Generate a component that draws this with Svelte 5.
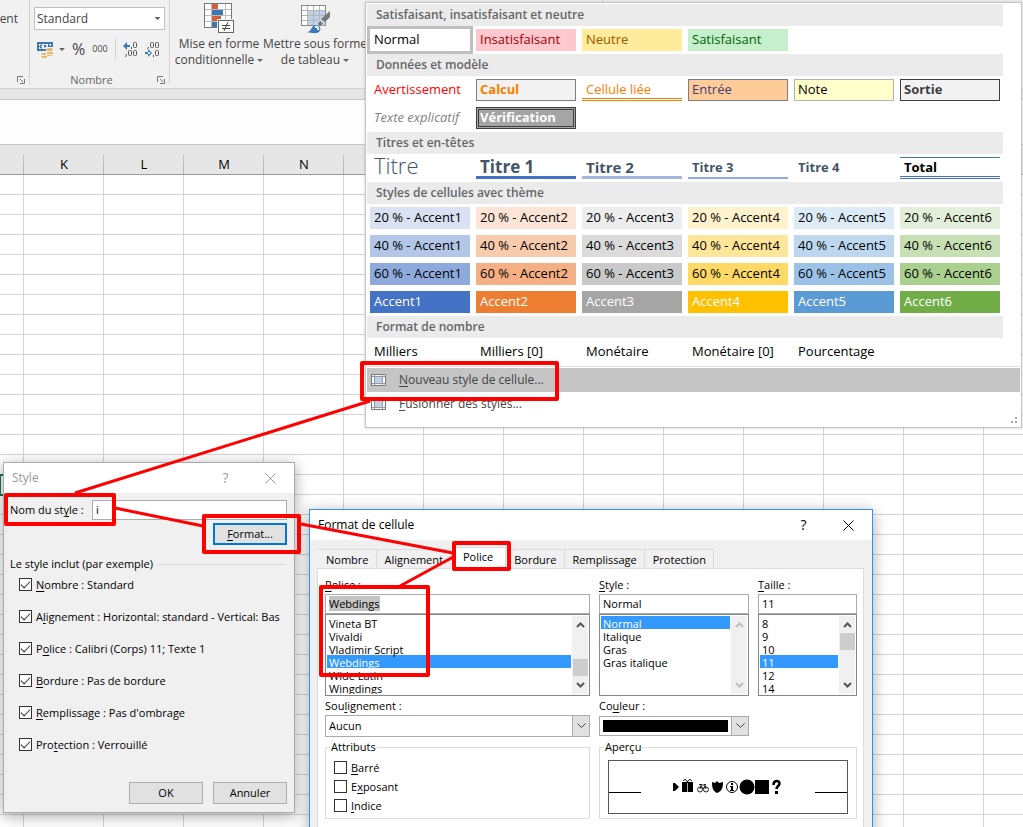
<script>
  import { onMount } from 'svelte';

  const columns = ['', 'K', 'L', 'M', 'N', '', '', '', '', '', '', '', '', ''];
  const rows = Array.from({ length: 33 }, (_, i) => i + 1);

  const accents = [1, 2, 3, 4, 5, 6];
  const tints = [20, 40, 60];

  const themed = [
    ...tints.flatMap((t) => accents.map((n) => ({ label: `${t} % - Accent${n}`, cls: `a${n} t${t}` }))),
    ...accents.map((n) => ({ label: `Accent${n}`, cls: `a${n} full` }))
  ];

  const sections = [
    {
      title: 'Satisfaisant, insatisfaisant et neutre',
      cells: [
        { label: 'Normal', cls: 'current' },
        { label: 'Insatisfaisant', cls: 'bad' },
        { label: 'Neutre', cls: 'neutral' },
        { label: 'Satisfaisant', cls: 'good' }
      ]
    },
    {
      title: 'Données et modèle',
      cells: [
        { label: 'Avertissement', cls: 'warning' },
        { label: 'Calcul', cls: 'calc' },
        { label: 'Cellule liée', cls: 'linked' },
        { label: 'Entrée', cls: 'entry' },
        { label: 'Note', cls: 'note' },
        { label: 'Sortie', cls: 'output' },
        { label: 'Texte explicatif', cls: 'explain' },
        { label: 'Vérification', cls: 'check' }
      ]
    },
    {
      title: 'Titres et en-têtes',
      cells: [
        { label: 'Titre', cls: 'title' },
        { label: 'Titre 1', cls: 'h1' },
        { label: 'Titre 2', cls: 'h2' },
        { label: 'Titre 3', cls: 'h3' },
        { label: 'Titre 4', cls: 'h4' },
        { label: 'Total', cls: 'total' }
      ]
    },
    { title: 'Styles de cellules avec thème', cells: themed },
    {
      title: 'Format de nombre',
      cells: [
        { label: 'Milliers', cls: '' },
        { label: 'Milliers [0]', cls: '' },
        { label: 'Monétaire', cls: '' },
        { label: 'Monétaire [0]', cls: '' },
        { label: 'Pourcentage', cls: '' }
      ]
    }
  ];

  // [before, access key, after]
  let includes = [
    { text: ['', 'N', 'ombre : Standard'], on: true },
    { text: ['A', 'l', 'ignement : Horizontal: standard - Vertical: Bas'], on: true },
    { text: ['P', 'o', 'lice : Calibri (Corps) 11; Texte 1'], on: true },
    { text: ['', 'B', 'ordure : Pas de bordure'], on: true },
    { text: ['', 'R', "emplissage : Pas d'ombrage"], on: true },
    { text: ['Pro', 't', 'ection : Verrouillé'], on: true }
  ];

  let effects = [
    { text: ['', 'B', 'arré'], on: false },
    { text: ['E', 'x', 'posant'], on: false },
    { text: ['', 'I', 'ndice'], on: false }
  ];

  const tabs = ['Nombre', 'Alignement', 'Police', 'Bordure', 'Remplissage', 'Protection'];
  let activeTab = 'Police';

  const fonts = ['Vineta BT', 'Vivaldi', 'Vladimir Script', 'Webdings', 'Wide Latin', 'Wingdings'];
  const faces = ['Normal', 'Italique', 'Gras', 'Gras italique'];
  const sizes = ['8', '9', '10', '11', '12', '14'];

  let styleName = 'i';
  let font = 'Webdings';
  let face = 'Normal';
  let size = '11';
  let fontInput;

  onMount(() => {
    fontInput.focus({ preventScroll: true });
    fontInput.select();
  });
</script>

<div class="desktop">
  <header class="ribbon">
    <div class="group align-group">
      <div class="clipped">ment</div>
      <button class="launcher" aria-label="Alignement">
        <svg width="8" height="8" viewBox="0 0 8 8"><path d="M.5 6V.5H6M3 3l3 3M7.500 3v4.500H3" fill="none" stroke="#777" /></svg>
      </button>
    </div>

    <div class="group number-group">
      <select class="number-format" aria-label="Format de nombre">
        <option>Standard</option>
      </select>
      <div class="number-tools">
        <button class="tool money" aria-label="Format comptable">
          <svg width="17" height="17" viewBox="0 0 17 17">
            <path d="M0 1h16v9H0z" fill="#3c78b5" />
            <path d="M2 3h2v1H3v1H2zM14 3h-2v1h1v1h1zM2 8h2V7H3V6H2z" fill="#fff" />
            <path d="M5 3h6v2l-2 3H5V6H4V5h1z" fill="#fff" />
            <circle cx="8" cy="5" r="1.500" fill="#3c78b5" />
            <path d="M9 6h8v11H3v-6h6z" fill="#f1f1f1" />
            <path d="M10 7h5v1h1v1h-1v1h-5V9H9V8h1zM10 11h6v2h-6zM5 12h4v2H4v-1h1zM10 14h5v1h-5zM4 15h6v2H5v-1H4z" fill="#e8b96a" />
          </svg>
          <span class="caret"></span>
        </button>
        <button class="tool percent">%</button>
        <button class="tool thousands">000</button>
        <span class="divider"></span>
        <button class="tool decimals" aria-label="Ajouter une décimale">
          <svg width="15" height="16" viewBox="0 0 15 16">
            <path d="M2 4h5v2H2zM4 1v8L0 5z" fill="#3c78b5" />
            <g fill="none" stroke="#555"><rect x="10.500" y="1.500" width="3" height="5" rx="1" /><rect x="5.500" y="9.500" width="3" height="5" rx="1" /><rect x="10.500" y="9.500" width="3" height="5" rx="1" /><path d="M8.500 6v2M3.500 13l-1 3" /></g>
          </svg>
        </button>
        <button class="tool decimals" aria-label="Réduire les décimales">
          <svg width="15" height="16" viewBox="0 0 15 16">
            <path d="M0 11h5v2H0zM3 8v8l4-4z" fill="#3c78b5" />
            <g fill="none" stroke="#555"><rect x="5.500" y="1.500" width="3" height="5" rx="1" /><rect x="10.500" y="1.500" width="3" height="5" rx="1" /><rect x="10.500" y="9.500" width="3" height="5" rx="1" /><path d="M3.500 6l-1 2M8.500 14v2" /></g>
          </svg>
        </button>
      </div>
      <div class="group-name">Nombre</div>
      <button class="launcher" aria-label="Nombre">
        <svg width="8" height="8" viewBox="0 0 8 8"><path d="M.5 6V.5H6M3 3l3 3M7.500 3v4.500H3" fill="none" stroke="#777" /></svg>
      </button>
    </div>

    <div class="group styles-group">
      <button class="big">
        <svg width="31" height="31" viewBox="0 0 31 31">
          <rect x=".5" y=".5" width="27" height="24" fill="#fff" stroke="#777" />
          <path d="M7.500 1v23M21.500 1v23M1 6.500h26M1 12.500h26M1 18.500h26" stroke="#bbb" fill="none" />
          <path d="M8 1h6v5H8zM8 13h9v5H8z" fill="#d65f3c" />
          <path d="M8 7h11v5H8zM8 19h5v5H8z" fill="#3c78b5" />
          <rect x="13" y="16" width="18" height="15" fill="#f1f1f1" />
          <rect x="14.500" y="17.500" width="15" height="12" fill="#fff" stroke="#666" />
          <path d="M18 22.500h8M18 25.500h8M24 19l-4 9" stroke="#444" fill="none" />
        </svg>
        <span>Mise en forme</span>
        <span>conditionnelle <i class="caret"></i></span>
      </button>
      <button class="big wide">
        <svg width="31" height="31" viewBox="0 0 31 31">
          <rect x="1.500" y="2.500" width="24" height="20" fill="#fff" stroke="#888" />
          <path d="M8 8h17v14H8z" fill="#bdd2ea" />
          <path d="M7.500 3v19M13.500 3v19M19.500 3v19M2 7.500h23M2 12.500h23M2 17.500h23" stroke="#b5b5b5" fill="none" />
          <path d="M30 8v6l-5 5-4-3z" fill="#777" />
          <path d="M20 17l4 4-4 3-3-3z" fill="#777" stroke="#f1f1f1" />
          <path d="M7 29c5 0 3-6 9-7 4 0 6 4 3 7-3 2-8 1-12 0z" fill="#3c78b5" />
          <path d="M15 24c2-1 4 1 3 3" stroke="#fff" stroke-width="2" fill="none" />
        </svg>
        <span>Mettre sous forme</span>
        <span>de tableau <i class="caret"></i></span>
      </button>
    </div>
  </header>

  <div class="formula-bar"></div>

  <table class="sheet">
    <thead>
      <tr>
        {#each columns as col}<th>{col}</th>{/each}
      </tr>
    </thead>
    <tbody>
      {#each rows as row}
        <tr>
          {#each columns as col, c}<td class:selected={row === 16 && c === 0}></td>{/each}
        </tr>
      {/each}
    </tbody>
  </table>

  <section class="gallery">
    {#each sections as section}
      <h2>{section.title}</h2>
      <div class="cells">
        {#each section.cells as cell}
          <button class="cell {cell.cls}">{cell.label}</button>
        {/each}
      </div>
    {/each}
    <div class="menu">
      <button class="menu-item hot">
        <svg width="16" height="14" viewBox="0 0 16 14">
          <path d="M.5 1.500h14v11H.5z" fill="#fff" stroke="#777" />
          <path d="M3.500 1v12M11.500 1v12M1 3.500h13M1 10.500h13" stroke="#999" fill="none" />
          <path d="M4 4h7v6H4z" fill="#bdd2ea" />
        </svg>
        <span><u>N</u>ouveau style de cellule...</span>
      </button>
      <button class="menu-item">
        <svg width="16" height="14" viewBox="0 0 16 14">
          <path d="M.5 1.500h14v11H.5z" fill="#fff" stroke="#777" />
          <path d="M3.500 1v12M11.500 1v12M1 3.500h13M1 10.500h13" stroke="#999" fill="none" />
          <path d="M4 4h7v6H4z" fill="#bdd2ea" />
          <path d="M5 0h6L8 3z" fill="#3c78b5" />
        </svg>
        <span><u>F</u>usionner des styles...</span>
      </button>
    </div>
    <svg class="grip" width="7" height="7" viewBox="0 0 7 7"><path d="M4 0h2v2H4zM0 4h2v2H0zM4 4h2v2H4z" fill="#aaa" /></svg>
  </section>

  <section class="dialog style-dialog">
    <div class="titlebar">
      <span class="caption">Style</span>
      <button class="help">?</button>
      <button class="close" aria-label="Fermer">
        <svg width="11" height="11" viewBox="0 0 11 11"><path d="M.5.5l10 10M10.500.5l-10 10" stroke="currentColor" fill="none" /></svg>
      </button>
    </div>
    <div class="style-body">
      <div class="name-row">
        <label for="style-name">Nom du st<u>y</u>le :</label>
        <input id="style-name" type="text" bind:value={styleName} />
      </div>
      <button class="push default"><span><u>F</u>ormat...</span></button>
      <div class="includes-title">Le style inclut (par exemple)</div>
      <div class="includes">
        {#each includes as item}
          <label class="tick">
            <input type="checkbox" bind:checked={item.on} />
            <span>{item.text[0]}<u>{item.text[1]}</u>{item.text[2]}</span>
          </label>
        {/each}
      </div>
      <div class="actions">
        <button class="push">OK</button>
        <button class="push">Annuler</button>
      </div>
    </div>
  </section>

  <section class="dialog format-dialog">
    <div class="titlebar">
      <span class="caption">Format de cellule</span>
      <button class="help">?</button>
      <button class="close" aria-label="Fermer">
        <svg width="11" height="11" viewBox="0 0 11 11"><path d="M.5.5l10 10M10.500.5l-10 10" stroke="currentColor" fill="none" /></svg>
      </button>
    </div>
    <nav class="tabs">
      {#each tabs as tab}
        <button class:active={tab === activeTab} on:click={() => (activeTab = tab)}>{tab}</button>
      {/each}
    </nav>
    <div class="panel">
      <div class="picker">
        <label for="font-name"><u>P</u>olice :</label>
        <input id="font-name" type="text" bind:value={font} bind:this={fontInput} />
        <div class="listbox">
          <select size="6" bind:value={font} aria-label="Police">
            {#each fonts as f}<option>{f}</option>{/each}
          </select>
          <div class="scrollbar low">
            <svg width="9" height="6" viewBox="0 0 9 6"><path d="M1 5l3.500-3.500L8 5" /></svg>
            <i></i>
            <svg width="9" height="6" viewBox="0 0 9 6"><path d="M1 1l3.500 3.500L8 1" /></svg>
          </div>
        </div>
      </div>
      <div class="picker">
        <label for="font-face"><u>S</u>tyle :</label>
        <input id="font-face" type="text" bind:value={face} />
        <div class="listbox">
          <select size="6" bind:value={face} aria-label="Style">
            {#each faces as f}<option>{f}</option>{/each}
          </select>
          <div class="scrollbar off">
            <svg width="9" height="6" viewBox="0 0 9 6"><path d="M1 5l3.500-3.500L8 5" /></svg>
            <svg width="9" height="6" viewBox="0 0 9 6"><path d="M1 1l3.500 3.500L8 1" /></svg>
          </div>
        </div>
      </div>
      <div class="picker">
        <label for="font-size"><u>T</u>aille :</label>
        <input id="font-size" type="text" bind:value={size} />
        <div class="listbox">
          <select size="6" bind:value={size} aria-label="Taille">
            {#each sizes as s}<option>{s}</option>{/each}
          </select>
          <div class="scrollbar high">
            <svg width="9" height="6" viewBox="0 0 9 6"><path d="M1 5l3.500-3.500L8 5" /></svg>
            <i></i>
            <svg width="9" height="6" viewBox="0 0 9 6"><path d="M1 1l3.500 3.500L8 1" /></svg>
          </div>
        </div>
      </div>

      <div class="combo">
        <label for="underline">Sou<u>l</u>ignement :</label>
        <div class="drop">
          <select id="underline"><option>Aucun</option></select>
          <span class="arrow"><svg width="9" height="6" viewBox="0 0 9 6"><path d="M.5.5l4 4 4-4" /></svg></span>
        </div>
      </div>
      <div class="combo color">
        <label for="color">Co<u>u</u>leur :</label>
        <div class="drop">
          <select id="color"><option aria-label="Noir"></option></select>
          <span class="swatch"></span>
          <span class="arrow"><svg width="9" height="6" viewBox="0 0 9 6"><path d="M.5.5l4 4 4-4" /></svg></span>
        </div>
      </div>

      <fieldset class="effects">
        <legend>Attributs</legend>
        {#each effects as item}
          <label class="tick">
            <input type="checkbox" bind:checked={item.on} />
            <span>{item.text[0]}<u>{item.text[1]}</u>{item.text[2]}</span>
          </label>
        {/each}
      </fieldset>
      <fieldset class="preview">
        <legend>Aperçu</legend>
        <div class="sample">
          <span class="rule"></span>
          <svg width="112" height="18" viewBox="0 0 112 18">
            <path d="M1 5h2l4 4-4 4H1z" />
            <path d="M10 4h11v10H10z" />
            <path d="M15.500 4c-1-3-4-3-4-1M15.500 4c1-3 4-3 4-1" fill="none" stroke="#000" />
            <path d="M15.500 5v9" stroke="#aaa" />
            <g fill="none" stroke="#222"><circle cx="28" cy="11.500" r="2.500" /><circle cx="34" cy="11.500" r="2.500" /><path d="M28 11l1-4h4l1 4M29 8l2 3 2-3M27 6.500h3M32 6.500h2" /></g>
            <path d="M40 4l3 1 2-2 2 2 4-1c0 6-1 9-6 11-4-2-5-5-5-11z" />
            <circle cx="60" cy="9" r="5.500" fill="none" stroke="#000" />
            <path d="M59 5h2v2h-2zM58 8h3v4h1v1h-4v-1h1V9h-1z" />
            <circle cx="75" cy="9" r="7.500" />
            <path d="M83 2h14v14H83z" />
            <path d="M101.500 7c0-5 6-5 6-1.500 0 2.500-3 2.500-3 5.500" fill="none" stroke="#000" stroke-width="2.500" />
            <path d="M103 13h3v3h-3z" />
          </svg>
          <span class="rule"></span>
        </div>
      </fieldset>
    </div>
  </section>

  <!-- walkthrough markers -->
  <svg class="marks" width="100%" height="100%">
    <g fill="none" stroke="#f00" stroke-width="4" stroke-linejoin="round">
      <rect x="362" y="363" width="195" height="36" />
      <rect x="6" y="495" width="108" height="29" />
      <rect x="204" y="516" width="95" height="36" />
      <rect x="454" y="543" width="55" height="26" />
      <rect x="321" y="587" width="107" height="88" />
    </g>
    <g stroke="#f00" stroke-width="3">
      <path d="M370 401L75 493M115 508l88 18M301 524l152 29M455 556l-55 30" />
    </g>
  </svg>
</div>

<style>
  :global(body) {
    margin: 0;
    overflow: hidden;
  }

  .desktop {
    position: relative;
    height: 100vh;
    overflow: hidden;
    background: #fff;
    color: #000;
    font: 11px/14px "Open Sans", "Noto Sans", sans-serif;
  }

  button,
  input,
  select {
    font: inherit;
    color: inherit;
    box-sizing: border-box;
    margin: 0;
    outline: none;
  }

  button {
    border: none;
    background: none;
    padding: 0;
  }

  svg {
    display: block;
    flex: none;
  }

  u {
    text-underline-offset: 2px;
  }

  /* ribbon */
  .ribbon {
    display: flex;
    height: 88px;
    background: #f1f1f1;
    border-bottom: 1px solid #d2d2d2;
    color: #444;
    font-size: 12px;
    line-height: 16px;
  }

  .group {
    position: relative;
    box-sizing: border-box;
    height: 84px;
    border-right: 1px solid #d2d2d2;
  }

  .align-group {
    width: 30px;
    padding-top: 11px;
  }

  .clipped {
    display: flex;
    justify-content: flex-end;
    width: 18px;
  }

  .launcher {
    position: absolute;
    right: 4px;
    bottom: 0;
  }

  .number-group {
    width: 140px;
    padding: 7px 4px 0;
  }

  .number-format {
    display: block;
    appearance: none;
    width: 100%;
    height: 23px;
    padding: 0 2px;
    border: 1px solid #c0c0c0;
    border-radius: 0;
    background: linear-gradient(#666, #666) no-repeat right 4px top 9px / 5px 1px,
      linear-gradient(#666, #666) no-repeat right 5px top 10px / 3px 1px,
      linear-gradient(#666, #666) no-repeat right 6px top 11px / 1px 1px, #fff;
  }

  .number-tools {
    display: flex;
    align-items: center;
    gap: 7px;
    height: 24px;
    margin-top: 7px;
    padding-left: 3px;
  }

  .money {
    display: flex;
    align-items: center;
    gap: 5px;
  }

  .caret {
    display: inline-block;
    border: 3px solid transparent;
    border-top-color: #666;
    border-bottom: none;
    vertical-align: middle;
  }

  .percent {
    font-size: 16px;
  }

  .thousands {
    font-size: 9px;
  }

  .divider {
    width: 1px;
    height: 22px;
    background: #d2d2d2;
  }

  .group-name {
    margin-top: 11px;
    padding-right: 16px;
    text-align: center;
    font-size: 11px;
    color: #666;
  }

  .styles-group {
    display: flex;
    align-items: flex-start;
    gap: 3px;
    width: 433px;
    padding: 3px 6px 0;
  }

  .big {
    display: flex;
    flex-direction: column;
    align-items: center;
    width: 86px;
    white-space: nowrap;
  }

  .big svg {
    margin-bottom: 2px;
  }

  .wide {
    width: 100px;
  }

  .formula-bar {
    box-sizing: border-box;
    height: 46px;
    margin-top: 10px;
    border: solid #c6c6c6;
    border-width: 1px 0;
    background: #fdfdfd;
    box-shadow: 0 -10px #e6e6e6;
  }

  /* sheet */
  .sheet {
    table-layout: fixed;
    width: 1064px;
    border-collapse: separate;
    border-spacing: 0;
  }

  th,
  td {
    box-sizing: border-box;
    width: 80px;
    padding: 0;
    border-right: 1px solid #d4d4d4;
    border-bottom: 1px solid #d4d4d4;
  }

  th:first-child,
  td:first-child {
    width: 24px;
  }

  th {
    height: 30px;
    padding-top: 8px;
    border-bottom-color: #9b9b9b;
    border-right: none;
    background: linear-gradient(#c6c6c6, #ababab) no-repeat right 10px / 1px 100%, #e6e6e6;
    font-size: 13px;
    font-weight: 400;
  }

  td {
    height: 20px;
  }

  .selected {
    outline: 2px solid #217346;
    outline-offset: -1px;
  }

  /* style gallery */
  .gallery {
    position: absolute;
    left: 365px;
    top: 2px;
    box-sizing: border-box;
    width: 657px;
    height: 426px;
    padding: 1px;
    border: 1px solid #c6c6c6;
    background: #fff;
    box-shadow: 0 0 3px rgba(0, 0, 0, 0.2);
  }

  h2 {
    width: 627px;
    margin: 0;
    padding-left: 9px;
    background: #ebebeb;
    color: #666;
    font-size: 12px;
    font-weight: 600;
    line-height: 22px;
  }

  .cells {
    display: grid;
    grid-template-columns: repeat(6, 100px);
    gap: 6px;
    padding: 3px;
  }

  .cell {
    height: 22px;
    padding: 0 4px 2px;
    text-align: left;
    font-size: 13px;
    line-height: 18px;
    white-space: nowrap;
  }

  .current { outline: 3px solid #c0c0c0; }
  .bad { background: #ffc7ce; color: #9c0006; }
  .neutral { background: #ffeb9c; color: #9c5700; }
  .good { background: #c6efce; color: #006100; }
  .warning { color: #f00; }
  .calc { border: 1px solid #7f7f7f; background: #f2f2f2; color: #fa7d00; font-weight: 700; padding: 0 3px 2px; }
  .linked { border-bottom: 3px double #fa7d00; color: #fa7d00; padding-bottom: 0; }
  .entry { border: 1px solid #7f7f7f; background: #fc9; color: #3f3f76; padding: 0 3px 2px; }
  .note { border: 1px solid #b2b2b2; background: #ffc; padding: 0 3px 2px; }
  .output { border: 1px solid #3f3f3f; background: #f2f2f2; color: #3f3f3f; font-weight: 700; padding: 0 3px 2px; }
  .explain { color: #7f7f7f; font-style: italic; }
  .check { border: 3px double #3f3f3f; background: #a5a5a5; color: #fff; font-weight: 700; padding: 0 1px 2px; line-height: 14px; }
  .title { color: #44546a; font-size: 22px; font-weight: 300; padding-bottom: 6px; line-height: 16px; }
  .h1 { border-bottom: 3px solid #4472c4; color: #44546a; font-size: 17px; font-weight: 700; padding-bottom: 0; }
  .h2 { border-bottom: 3px solid #a2b8e1; color: #44546a; font-size: 15px; font-weight: 700; padding-bottom: 0; }
  .h3 { border-bottom: 2px solid #8ea9db; color: #44546a; font-weight: 700; padding-bottom: 0; }
  .h4 { color: #44546a; font-weight: 700; }
  .total { border-top: 1px solid #4472c4; border-bottom: 3px double #4472c4; font-weight: 700; padding-bottom: 0; }

  .a1.t20 { background: #d9e1f2; }
  .a1.t40 { background: #b4c6e7; }
  .a1.t60 { background: #8ea9db; }
  .a1.full { background: #4472c4; }
  .a2.t20 { background: #fce4d6; }
  .a2.t40 { background: #f8cbad; }
  .a2.t60 { background: #f4b084; }
  .a2.full { background: #ed7d31; }
  .a3.t20 { background: #ededed; }
  .a3.t40 { background: #dbdbdb; }
  .a3.t60 { background: #c9c9c9; }
  .a3.full { background: #a5a5a5; }
  .a4.t20 { background: #fff2cc; }
  .a4.t40 { background: #ffe699; }
  .a4.t60 { background: #ffd966; }
  .a4.full { background: #ffc000; }
  .a5.t20 { background: #ddebf7; }
  .a5.t40 { background: #bdd7ee; }
  .a5.t60 { background: #9bc2e6; }
  .a5.full { background: #5b9bd5; }
  .a6.t20 { background: #e2efda; }
  .a6.t40 { background: #c6e0b4; }
  .a6.t60 { background: #a9d08e; }
  .a6.full { background: #70ad47; }
  .full { color: #fff; }

  .menu {
    border-top: 1px solid #e1e1e1;
    padding-top: 1px;
  }

  .menu-item {
    display: flex;
    align-items: center;
    gap: 12px;
    width: 100%;
    height: 24px;
    padding-left: 4px;
    color: #444;
    font-size: 12px;
  }

  .hot {
    background: #c5c5c5;
  }

  .grip {
    position: absolute;
    right: 3px;
    bottom: 3px;
  }

  /* dialogs */
  .dialog {
    position: absolute;
    box-sizing: border-box;
    border: 1px solid #aaa;
    background: #f0f0f0;
    box-shadow: 0 3px 14px rgba(0, 0, 0, 0.35);
  }

  .style-dialog {
    left: 3px;
    top: 462px;
    width: 292px;
  }

  .format-dialog {
    left: 309px;
    top: 509px;
    width: 564px;
    border-color: #3a8ee6;
  }

  .titlebar {
    display: flex;
    align-items: center;
    height: 30px;
    padding: 0 18px 0 8px;
    background: #fff;
    font-size: 12px;
  }

  .style-dialog .titlebar {
    color: #999;
  }

  .caption {
    flex: 1;
  }

  .help {
    width: 11px;
    margin-right: 34px;
    font-size: 14px;
  }

  .style-body {
    display: flex;
    flex-direction: column;
    padding: 7px 7px 8px 6px;
  }

  .name-row {
    display: flex;
    align-items: center;
  }

  .name-row label {
    width: 82px;
  }

  .name-row input {
    flex: 1;
    min-width: 0;
  }

  input[type='text'] {
    height: 20px;
    padding: 0 3px 2px;
    border: 1px solid #ababab;
    border-radius: 0;
    background: #fff;
  }

  input::selection {
    background: #c3c3c3;
    color: #000;
  }

  .push {
    width: 74px;
    height: 22px;
    border: 1px solid #adadad;
    background: #e1e1e1;
  }

  .default {
    align-self: flex-end;
    margin-top: 3px;
    border: 2px solid #0078d7;
  }

  .includes-title {
    display: flex;
    align-items: center;
    gap: 5px;
    margin-top: 12px;
    white-space: nowrap;
  }

  .includes-title::after {
    content: '';
    flex: 1;
    height: 1px;
    background: #dcdcdc;
  }

  .includes {
    display: grid;
    gap: 18px;
    margin-top: 7px;
    padding-left: 9px;
  }

  .tick {
    display: flex;
    align-items: center;
    gap: 4px;
    height: 14px;
    white-space: nowrap;
  }

  .tick input {
    display: grid;
    place-items: center;
    appearance: none;
    flex: none;
    width: 13px;
    height: 13px;
    border: 1px solid #333;
    background: #fff;
  }

  .includes input {
    align-self: flex-start;
  }

  .tick input:checked::after {
    content: '';
    width: 8px;
    height: 4px;
    margin-bottom: 3px;
    border: solid #333;
    border-width: 0 0 1px 1px;
    transform: rotate(-45deg);
  }

  .actions {
    display: flex;
    justify-content: flex-end;
    gap: 10px;
    margin-top: 30px;
  }

  /* format dialog */
  .tabs {
    display: flex;
    align-items: flex-end;
    height: 28px;
    padding-left: 8px;
  }

  .tabs button {
    height: 19px;
    padding: 1px 7px 0 8px;
    border: solid #dcdcdc;
    border-width: 1px 1px 0 0;
  }

  .tabs .active {
    height: 22px;
    padding: 0 12px 3px;
    margin-bottom: -1px;
    background: #fff;
  }

  .panel {
    display: grid;
    grid-template-columns: 265fr 150fr 99fr;
    column-gap: 9px;
    margin: 0 8px 0 7px;
    padding: 9px 6px 60px 7px;
    border: 1px solid #dcdcdc;
    background: #fff;
  }

  .picker {
    display: flex;
    flex-direction: column;
    min-width: 0;
  }

  .picker label,
  .combo label {
    display: block;
    height: 16px;
  }

  .listbox {
    display: flex;
    box-sizing: border-box;
    height: 82px;
    padding: 1px;
    border: 1px solid #828790;
  }

  .listbox select {
    flex: 1;
    min-width: 0;
    height: 78px;
    padding: 0;
    border: none;
    border-radius: 0;
    overflow: hidden;
    background: #fff;
  }

  .listbox option {
    height: 13px;
    min-height: 0;
    padding: 0 2px;
    line-height: 11px;
    box-sizing: border-box;
  }

  .listbox option:checked {
    background: linear-gradient(#39f, #39f);
    -webkit-text-fill-color: #fff;
  }

  .scrollbar {
    display: flex;
    flex-direction: column;
    align-items: center;
    justify-content: space-between;
    box-sizing: border-box;
    width: 16px;
    margin-left: 1px;
    padding: 6px 0;
    background: #f0f0f0;
  }

  .scrollbar i {
    width: 15px;
    height: 17px;
    background: #cdcdcd;
  }

  .low i {
    margin-top: 24px;
  }

  .high i {
    margin-bottom: 28px;
  }

  .scrollbar path {
    fill: none;
    stroke: #555;
    stroke-width: 2;
  }

  .off path {
    stroke: #bfbfbf;
  }

  .combo {
    margin-top: 3px;
  }

  .color {
    grid-column: 2 / 4;
    width: 150px;
  }

  .drop {
    position: relative;
  }

  .drop select {
    display: block;
    appearance: none;
    width: 100%;
    height: 22px;
    padding: 0 3px;
    border: 1px solid #ababab;
    border-radius: 0;
    background: #fff;
  }

  .color .drop {
    margin-top: 1px;
  }

  .color select {
    height: 20px;
  }

  .arrow {
    position: absolute;
    top: 0;
    right: 0;
    bottom: 0;
    display: grid;
    place-items: center;
    box-sizing: border-box;
    width: 18px;
    border: 1px solid #ababab;
    background: #e1e1e1;
    pointer-events: none;
  }

  .arrow path {
    fill: none;
    stroke: #444;
  }

  .swatch {
    position: absolute;
    inset: 4px 21px 4px 4px;
    background: #000;
    pointer-events: none;
  }

  fieldset {
    box-sizing: border-box;
    min-width: 0;
    height: 79px;
    margin: 3px 0 0;
    padding: 6px 8px 0;
    border: 1px solid #dcdcdc;
  }

  legend {
    margin-left: -4px;
    padding: 0 1px;
  }

  .effects {
    padding-top: 4px;
  }

  .effects .tick {
    height: 19px;
  }

  .preview {
    grid-column: 2 / 4;
  }

  .sample {
    display: flex;
    align-items: center;
    justify-content: space-between;
    box-sizing: border-box;
    height: 54px;
    border: 1px solid #555;
  }

  .rule {
    width: 32px;
    height: 1px;
    margin-top: 11px;
    background: #000;
  }

  .marks {
    position: absolute;
    inset: 0;
    pointer-events: none;
  }
</style>
